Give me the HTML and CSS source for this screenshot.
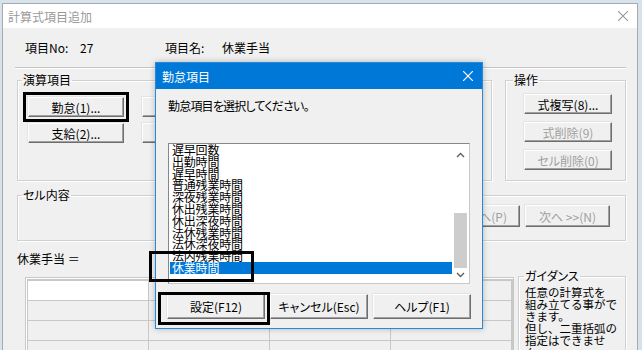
FILE: index.html
```html
<!DOCTYPE html>
<html lang="ja">
<head>
    <meta charset="UTF-8">
    <title>計算式項目追加</title>
    <link rel="stylesheet" href="styles.css">
</head>
<body>
    <div class="window">
        <div class="titlebar">
            <span class="title">計算式項目追加</span>
            <svg class="close" width="10" height="10" viewBox="0 0 10 10">
                <path d="M0 0 L10 10 M10 0 L0 10" stroke="#999" stroke-width="1.1" fill="none"/>
            </svg>
        </div>
        <div class="content">
            <div class="info">
                <span class="lbl-no">項目No:</span><span class="val-no">27</span><span class="lbl-name">項目名:</span><span>休業手当</span>
            </div>
            <div class="sep"></div>

            <div class="groups">
                <fieldset class="group calc">
                    <legend>演算項目</legend>
                    <div class="calc-buttons">
                        <button class="btn">勤怠(1)...</button>
                        <button class="btn"></button>
                        <button class="btn">支給(2)...</button>
                        <button class="btn"></button>
                    </div>
                </fieldset>
                <fieldset class="group ops">
                    <legend>操作</legend>
                    <div class="ops-buttons">
                        <button class="btn">式複写(8)...</button>
                        <button class="btn" disabled>式削除(9)</button>
                        <button class="btn" disabled>セル削除(0)</button>
                    </div>
                </fieldset>
            </div>

            <fieldset class="group cell">
                <legend>セル内容</legend>
                <div class="cell-buttons">
                    <button class="btn prev" disabled>へ(P)</button>
                    <button class="btn" disabled>次へ &gt;&gt;(N)</button>
                </div>
            </fieldset>

            <div class="formula">休業手当 ＝</div>

            <div class="bottom">
                <div class="sheet">
                    <div class="cell first"></div><div class="cell"></div><div class="cell"></div><div class="cell"></div>
                    <div class="cell"></div><div class="cell"></div><div class="cell"></div><div class="cell"></div>
                    <div class="cell"></div><div class="cell"></div><div class="cell"></div><div class="cell"></div>
                    <div class="cell"></div><div class="cell"></div><div class="cell"></div><div class="cell"></div>
                </div>
                <fieldset class="group guide">
                    <legend>ガイダンス</legend>
                    <div class="guide-text">任意の計算式を<br>組み立てる事がで<br>きます。<br>但し、二重括弧の<br>指定はできませ<br>ん。</div>
                </fieldset>
            </div>
        </div>
    </div>

    <div class="dialog">
        <div class="dlg-title">
            <span>勤怠項目</span>
            <svg width="10" height="10" viewBox="0 0 10 10">
                <path d="M0 0 L10 10 M10 0 L0 10" stroke="#fff" stroke-width="1.2" fill="none"/>
            </svg>
        </div>
        <div class="dlg-body">
            <div class="prompt">勤怠項目を選択してください。</div>
            <div class="listbox">
                <ul class="items">
                    <li>遅早回数</li>
                    <li>出勤時間</li>
                    <li>遅早時間</li>
                    <li>普通残業時間</li>
                    <li>深夜残業時間</li>
                    <li>休出残業時間</li>
                    <li>休出深夜時間</li>
                    <li>法休残業時間</li>
                    <li>法休深夜時間</li>
                    <li>法内残業時間</li>
                    <li class="selected">休業時間</li>
                </ul>
                <div class="scrollbar">
                    <svg class="arrow up" width="9" height="6" viewBox="0 0 9 6">
                        <path d="M1 5 L4.5 1.5 L8 5" stroke="#606060" stroke-width="1.4" fill="none"/>
                    </svg>
                    <div class="track"><div class="thumb"></div></div>
                    <svg class="arrow down" width="9" height="6" viewBox="0 0 9 6">
                        <path d="M1 1 L4.5 4.5 L8 1" stroke="#606060" stroke-width="1.4" fill="none"/>
                    </svg>
                </div>
            </div>
            <div class="dlg-buttons">
                <button class="btn">設定(F12)</button>
                <button class="btn">キャンセル(Esc)</button>
                <button class="btn">ヘルプ(F1)</button>
            </div>
        </div>
    </div>

    <div class="mark mark-kintai"></div>
    <div class="mark mark-item"></div>
    <div class="mark mark-set"></div>
</body>
</html>
```

FILE: styles.css
```css
body {
    margin: 0;
    height: 350px;
    overflow: hidden;
    position: relative;
    background: #d6e2ec;
    font-family: "Noto Sans CJK JP", sans-serif;
    font-size: 12px;
    font-feature-settings: "palt";
    color: #000;
}

.window {
    margin: 3px 0 0 2px;
    width: 634px;
    height: 400px;
    border: 1px solid #aaa;
    background: #f0f0f0;
}

.titlebar {
    height: 24px;
    background: #fff;
    display: flex;
    align-items: center;
    justify-content: space-between;
    padding: 0 9px 0 5px;
}

.title {
    color: #999;
}

.content {
    padding: 12px 11px 0 14px;
}

.info {
    line-height: 16px;
    padding-left: 8px;
}

.lbl-no {
    display: inline-block;
    width: 55px;
}

.val-no {
    display: inline-block;
    width: 85px;
}

.lbl-name {
    display: inline-block;
    width: 57px;
}

.sep {
    margin: 11px 0 0 -2px;
    border-top: 1px solid #c4c4c4;
    border-bottom: 1px solid #fff;
}

/* group boxes */
.group {
    margin: 0;
    padding: 0;
    min-width: 0;
    border: 1px solid #d0d0d0;
    box-shadow: inset 1px 1px #fff, 1px 1px #fff;
}

.group legend {
    margin-left: 4px;
    padding: 0 1px;
    line-height: 14px;
}

.groups {
    display: flex;
    margin-top: 4px;
}

.calc {
    width: 473px;
    height: 106px;
}

.calc-buttons {
    display: grid;
    grid-template-columns: 96px 96px;
    grid-auto-rows: 20px;
    column-gap: 18px;
    row-gap: 6px;
    padding: 10px 0 0 10px;
}

.ops {
    margin-left: 13px;
    flex: 1;
    height: 106px;
}

.ops legend {
    margin-left: 7px;
}

.ops-buttons {
    display: flex;
    flex-direction: column;
    gap: 8px;
    padding: 7px 0 0 18px;
}

.ops-buttons .btn {
    width: 88px;
    height: 20px;
}

.cell {
    margin-top: 7px;
    height: 51px;
}

.cell-buttons {
    display: flex;
    justify-content: flex-end;
    gap: 5px;
    padding: 3px 15px 0 0;
}

.cell-buttons .btn {
    width: 85px;
    height: 22px;
}

.cell-buttons .prev {
    text-align: right;
    padding-right: 12px;
}

.formula {
    margin-top: 10px;
    line-height: 16px;
}

.bottom {
    display: flex;
    align-items: flex-start;
}

.sheet {
    margin: 10px 0 0 8px;
    padding: 3px 2px 0 2px;
    border: 1px solid #c8c8c8;
    border-bottom: none;
    display: grid;
    grid-template-columns: repeat(4, 120px);
    grid-auto-rows: 19px;
    gap: 1px;
    background: #c8c8c8;
    box-shadow: inset 1px 1px #fff;
}

.sheet .cell {
    margin: 0;
    height: auto;
    background: #f0f0f0;
    border: none;
    box-shadow: none;
}

.sheet .first {
    background: #fff;
}

.guide {
    margin: 2px 0 0 auto;
    width: 106px;
    height: 100px;
}

.guide legend {
    margin-left: 5px;
}

.guide-text {
    padding: 3px 0 0 6px;
    font-size: 11.5px;
    line-height: 12px;
    font-feature-settings: normal;
}

/* buttons */
.btn {
    display: block;
    margin: 0;
    padding: 0;
    font-family: inherit;
    font-size: 12px;
    font-feature-settings: "palt";
    color: #000;
    background: #f0f0f0;
    border: 1px solid;
    border-color: #fff #6e6e6e #6e6e6e #fff;
    box-shadow: inset -1px -1px #a0a0a0, -1px -1px #e3e3e3;
}

.btn:disabled {
    color: #a0a0a0;
}

/* dialog */
.dialog {
    position: absolute;
    left: 155px;
    top: 62px;
    width: 326px;
    height: 265px;
    border: 1px solid #2a88d8;
    background: #f0f0f0;
    box-shadow: 0 0 6px rgba(0, 0, 0, 0.25);
}

.dlg-title {
    height: 26px;
    background: #0078d7;
    color: #fff;
    display: flex;
    align-items: center;
    justify-content: space-between;
    padding: 0 9px 0 6px;
}

.dlg-body {
    padding: 9px 0 0 12px;
}

.prompt {
    line-height: 16px;
    letter-spacing: -0.8px;
}

.listbox {
    margin-top: 29px;
    width: 300px;
    height: 139px;
    border: 1px solid #828790;
    border-right-color: #c8c8c8;
    border-bottom-color: #c8c8c8;
    background: #fff;
    display: flex;
}

.items {
    flex: 1;
    margin: 0;
    padding: 0 0 0 1px;
    list-style: none;
    font-feature-settings: normal;
}

.items li {
    line-height: 11.8px;
    height: 11.8px;
    padding-left: 2px;
    letter-spacing: -0.2px;
}

.items .selected {
    background: #0078d7;
    color: #fff;
}

.scrollbar {
    width: 17px;
    display: flex;
    flex-direction: column;
    align-items: center;
    background: #fff;
}

.arrow.up {
    margin: 8px 0;
}

.arrow.down {
    margin: 4px 0 5px;
}

.track {
    flex: 1;
    width: 13px;
    display: flex;
    flex-direction: column;
    justify-content: flex-end;
}

.thumb {
    height: 55px;
    background: #cdcdcd;
}

.dlg-buttons {
    display: flex;
    gap: 5px;
    margin: 10px 0 0 -1px;
}

.dlg-buttons .btn {
    width: 98px;
    height: 25px;
}

/* annotation frames */
.mark {
    position: absolute;
    box-sizing: border-box;
    border: 3px solid #000;
}

.mark-kintai {
    left: 23px;
    top: 92px;
    width: 106px;
    height: 30px;
}

.mark-item {
    left: 149px;
    top: 251px;
    width: 105px;
    height: 31px;
}

.mark-set {
    left: 158px;
    top: 292px;
    width: 112px;
    height: 33px;
}
```
